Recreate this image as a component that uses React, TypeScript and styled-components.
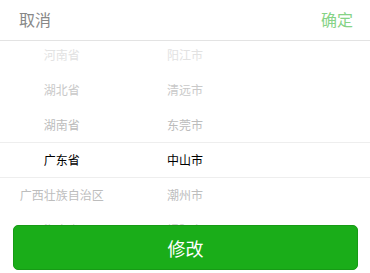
import React from "react";
import styled, { createGlobalStyle } from "styled-components";

const Global = createGlobalStyle`
  html, body { margin: 0; padding: 0; background: #fff; }
  body { font-family: "Noto Sans CJK SC", "Noto Sans", sans-serif; }
`;

const Page = styled.div`
  position: relative;
  width: 370px;
  height: 273px;
  overflow: hidden;
  background: #fff;
`;

const Header = styled.div`
  display: flex;
  justify-content: space-between;
  align-items: center;
  box-sizing: border-box;
  height: 41px;
  padding: 0 17px 3px 19px;
  border-bottom: 1px solid #e3e3e3;
  font-size: 16px;
`;

const HeaderButton = styled.span<{ $primary?: boolean }>`
  color: ${(p) => (p.$primary ? "#86d386" : "#888888")};
  line-height: 20px;
`;

const Picker = styled.div`
  position: relative;
  display: grid;
  grid-template-columns: repeat(3, 1fr);
  height: 232px;
  overflow: hidden;
`;

const Indicator = styled.div`
  position: absolute;
  left: 0;
  right: 0;
  top: 101px;
  height: 34px;
  border-top: 1px solid #eeeeee;
  border-bottom: 1px solid #eeeeee;
  pointer-events: none;
`;

const Column = styled.div`
  display: flex;
  flex-direction: column;
  margin-top: -4px;
`;

const Item = styled.div<{ $tone: string }>`
  height: 35px;
  display: flex;
  align-items: center;
  justify-content: center;
  font-size: 12px;
  white-space: nowrap;
  color: ${(p) => p.$tone};
`;

const ActionButton = styled.button`
  position: absolute;
  left: 13px;
  right: 12px;
  bottom: 3px;
  height: 45px;
  border: 1px solid #179b16;
  border-radius: 5px;
  background: #1aad19;
  color: #fff;
  font-family: "Noto Sans CJK SC", "Noto Sans", sans-serif;
  font-size: 18px;
  cursor: pointer;
`;

const tones = ["#e2e2e2", "#c9c9c9", "#bcbcbc", "#000000", "#bdbdbd", "#cfcfcf"];

const provinces = ["河南省", "湖北省", "湖南省", "广东省", "广西壮族自治区", "海南省"];
const cities = ["阳江市", "清远市", "东莞市", "中山市", "潮州市", "揭阳市"];

export default function App() {
  return (
    <Page>
      <Global />
      <Header>
        <HeaderButton>取消</HeaderButton>
        <HeaderButton $primary>确定</HeaderButton>
      </Header>
      <Picker>
        <Indicator />
        <Column>
          {provinces.map((p, i) => (
            <Item key={p} $tone={tones[i]}>{p}</Item>
          ))}
        </Column>
        <Column>
          {cities.map((c, i) => (
            <Item key={c} $tone={tones[i]}>{c}</Item>
          ))}
        </Column>
        <Column />
      </Picker>
      <ActionButton>修改</ActionButton>
    </Page>
  );
}
